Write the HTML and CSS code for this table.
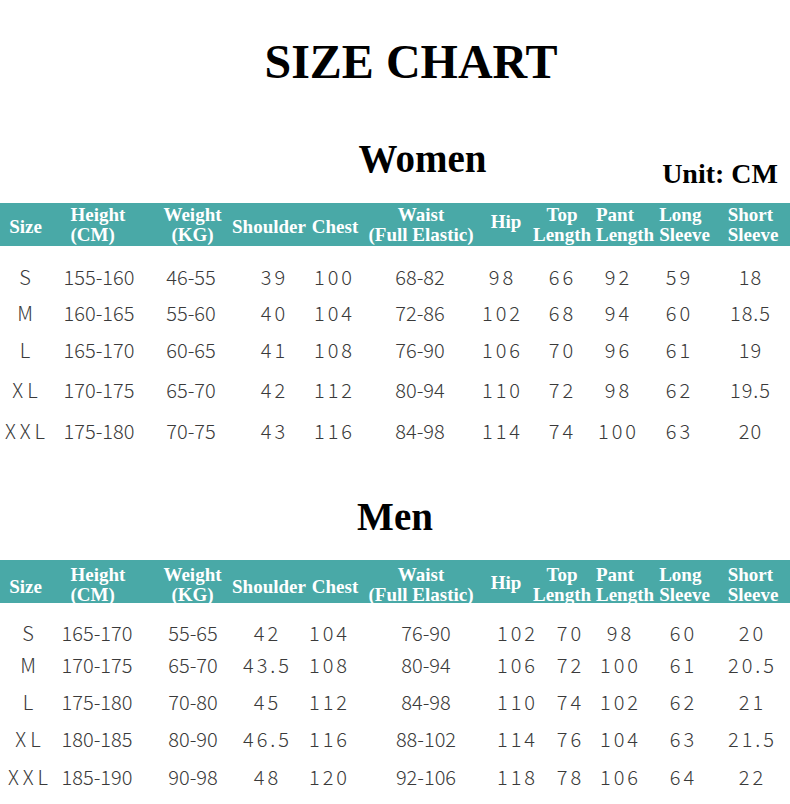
FILE: index.html
```html
<!DOCTYPE html>
<html lang="en">
<head>
<meta charset="utf-8">
<title>Size Chart</title>
<link rel="stylesheet" href="styles.css">
</head>
<body>
<div class="page">
  <h1 class="title">SIZE CHART</h1>

  <div class="sec-head women-head">
    <span></span>
    <h2 class="sec-title">Women</h2>
    <div class="unit">Unit: CM</div>
  </div>

  <div class="table women">
    <div class="thead">
      <div class="th one">Size</div>
      <div class="th"><div class="lft">Height<br>(CM)</div></div>
      <div class="th">Weight<br>(KG)</div>
      <div class="th one">Shoulder</div>
      <div class="th one">Chest</div>
      <div class="th">Waist<br>(Full Elastic)</div>
      <div class="th hip">Hip</div>
      <div class="th">Top<br>Length</div>
      <div class="th"><div class="lft">Pant<br>Length</div></div>
      <div class="th"><div class="lft">Long<br>Sleeve</div></div>
      <div class="th"><div class="lft">Short<br>Sleeve</div></div>
    </div>
    <div class="tbody">
      <span>S</span><span>155-160</span><span>46-55</span><span>39</span><span>100</span><span>68-82</span><span>98</span><span>66</span><span>92</span><span>59</span><span>18</span>
      <span>M</span><span>160-165</span><span>55-60</span><span>40</span><span>104</span><span>72-86</span><span>102</span><span>68</span><span>94</span><span>60</span><span>18.5</span>
      <span>L</span><span>165-170</span><span>60-65</span><span>41</span><span>108</span><span>76-90</span><span>106</span><span>70</span><span>96</span><span>61</span><span>19</span>
      <span>XL</span><span>170-175</span><span>65-70</span><span>42</span><span>112</span><span>80-94</span><span>110</span><span>72</span><span>98</span><span>62</span><span>19.5</span>
      <span>XXL</span><span>175-180</span><span>70-75</span><span>43</span><span>116</span><span>84-98</span><span>114</span><span>74</span><span>100</span><span>63</span><span>20</span>
    </div>
  </div>

  <h2 class="sec-title men-title">Men</h2>

  <div class="table men">
    <div class="thead">
      <div class="th one">Size</div>
      <div class="th"><div class="lft">Height<br>(CM)</div></div>
      <div class="th">Weight<br>(KG)</div>
      <div class="th one">Shoulder</div>
      <div class="th one">Chest</div>
      <div class="th">Waist<br>(Full Elastic)</div>
      <div class="th hip">Hip</div>
      <div class="th">Top<br>Length</div>
      <div class="th"><div class="lft">Pant<br>Length</div></div>
      <div class="th"><div class="lft">Long<br>Sleeve</div></div>
      <div class="th"><div class="lft">Short<br>Sleeve</div></div>
    </div>
    <div class="tbody">
      <span>S</span><span>165-170</span><span>55-65</span><span>42</span><span>104</span><span>76-90</span><span>102</span><span>70</span><span>98</span><span>60</span><span>20</span>
      <span>M</span><span>170-175</span><span>65-70</span><span>43.5</span><span>108</span><span>80-94</span><span>106</span><span>72</span><span>100</span><span>61</span><span>20.5</span>
      <span>L</span><span>175-180</span><span>70-80</span><span>45</span><span>112</span><span>84-98</span><span>110</span><span>74</span><span>102</span><span>62</span><span>21</span>
      <span>XL</span><span>180-185</span><span>80-90</span><span>46.5</span><span>116</span><span>88-102</span><span>114</span><span>76</span><span>104</span><span>63</span><span>21.5</span>
      <span>XXL</span><span>185-190</span><span>90-98</span><span>48</span><span>120</span><span>92-106</span><span>118</span><span>78</span><span>106</span><span>64</span><span>22</span>
    </div>
  </div>
</div>
</body>
</html>
```

FILE: styles.css
```css
html, body {
  margin: 0;
  padding: 0;
  background: #ffffff;
  overflow: hidden;
}

.page {
  width: 790px;
  height: 804px;
  overflow: hidden;
  color: #000;
}

.title {
  margin: 0;
  padding: 38px 0 0 32px;
  font: bold 48px/48px "Liberation Serif", "Times New Roman", serif;
  text-align: center;
}

.sec-title {
  margin: 0;
  font: bold 39px/39px "Liberation Serif", "Times New Roman", serif;
  text-align: center;
}

.sec-head {
  display: grid;
  grid-template-columns: 1fr auto 1fr;
  align-items: end;
  margin-top: 53px;
  padding: 0 12px 0 67px;
}

.unit {
  justify-self: end;
  margin-bottom: -10px;
  font: bold 28px/28px "Liberation Serif", "Times New Roman", serif;
}

.table {
  margin-top: 25px;
}

.men-title {
  margin-top: 46px;
}

.men {
  margin-top: 24px;
}

.thead {
  display: grid;
  box-sizing: border-box;
  height: 43px;
  background: #49a9a7;
  grid-template-columns: 51px 94px 95px 58px 74px 98px 72px 40px 86px 33px 104px;
}

.men .thead {
  padding-top: 5px;
}

.th {
  display: flex;
  flex-direction: column;
  align-items: center;
  justify-content: center;
  min-width: 0;
  white-space: nowrap;
  text-align: center;
  color: #ffffff;
  font: bold 19px/20px "Liberation Serif", "Times New Roman", serif;
}

.th.one {
  padding-top: 4px;
}

.th.hip {
  padding-bottom: 5px;
}

.th .lft {
  text-align: left;
}

.tbody {
  display: grid;
  align-items: center;
  font: 300 20px/24px "Noto Sans CJK SC", "Noto Sans", sans-serif;
  color: #3a3a3a;
}

.women .tbody {
  padding-top: 13px;
  grid-template-columns: 50px 98px 86px 78px 42px 132px 30px 90px 22px 100px 44px;
  grid-template-rows: 36px 36px 38px 42px 40px;
}

.men .tbody {
  padding-top: 14px;
  grid-template-columns: 56px 82px 110px 36px 88px 108px 72px 34px 66px 60px 78px;
  grid-template-rows: 32px 32px 42px 32px 44px;
}

.tbody > span {
  display: flex;
  justify-content: center;
  min-width: 0;
  white-space: nowrap;
}

.tbody > span:nth-child(11n+1) {
  letter-spacing: 4px;
  padding-left: 4px;
}

.tbody > span:nth-child(11n+4),
.tbody > span:nth-child(11n+5),
.tbody > span:nth-child(11n+7),
.tbody > span:nth-child(11n+8),
.tbody > span:nth-child(11n+9),
.tbody > span:nth-child(11n+10),
.tbody > span:nth-child(11n+11) {
  letter-spacing: 3px;
  padding-left: 3px;
}

.women .tbody > span:nth-child(11n+11) {
  letter-spacing: 1px;
  padding-left: 1px;
}
```
